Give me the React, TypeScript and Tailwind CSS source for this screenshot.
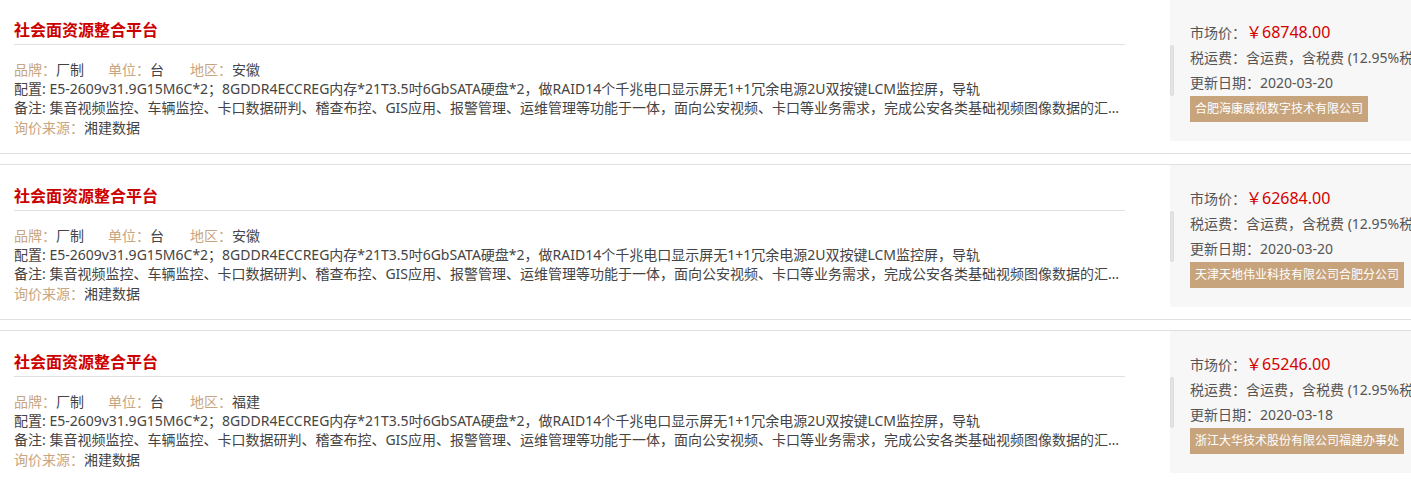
import React from "react";

type Item = {
  region: string;
  price: string;
  date: string;
  company: string;
};

const items: Item[] = [
  { region: "安徽", price: "￥68748.00", date: "2020-03-20", company: "合肥海康威视数字技术有限公司" },
  { region: "安徽", price: "￥62684.00", date: "2020-03-20", company: "天津天地伟业科技有限公司合肥分公司" },
  { region: "福建", price: "￥65246.00", date: "2020-03-18", company: "浙江大华技术股份有限公司福建办事处" },
];

const config =
  "E5-2609v31.9G15M6C*2；8GDDR4ECCREG内存*21T3.5吋6GbSATA硬盘*2，做RAID14个千兆电口显示屏无1+1冗余电源2U双按键LCM监控屏，导轨";
const remark =
  "集音视频监控、车辆监控、卡口数据研判、稽查布控、GIS应用、报警管理、运维管理等功能于一体，面向公安视频、卡口等业务需求，完成公安各类基础视频图像数据的汇聚、整合、共享与应用，实现视频资源的统一管理与调度";

function Row({ item }: { item: Item }) {
  return (
    <div className="flex h-[156px] border-y border-[#e0e0e0] mb-[10px] overflow-hidden">
      <div className="ml-[14px] w-[1111px] shrink-0">
        <div className="pt-[21px] pb-[4px] border-b border-[#e0e0e0] text-[16px] leading-[20px] font-bold text-[#cc0000]">
          社会面资源整合平台
        </div>
        <div className="mt-[15px] text-[14px] leading-[19px] text-[#444]">
          <div className="flex whitespace-nowrap">
            <span className="mr-[24px]">
              <span className="text-[#c8a57f]">品牌：</span>厂制
            </span>
            <span className="mr-[26px]">
              <span className="text-[#c8a57f]">单位：</span>台
            </span>
            <span>
              <span className="text-[#c8a57f]">地区：</span>
              {item.region}
            </span>
          </div>
          <div className="whitespace-nowrap overflow-hidden text-ellipsis">配置: {config}</div>
          <div className="whitespace-nowrap overflow-hidden text-ellipsis w-[1108px]">备注: {remark}</div>
          <div className="mt-[1px] whitespace-nowrap">
            <span className="text-[#c8a57f]">询价来源：</span>湘建数据
          </div>
        </div>
      </div>
      <div className="ml-[45px] flex-1 min-w-0 h-[142px] bg-[#f7f7f7] relative overflow-hidden">
        <div className="absolute left-0 top-[46px] w-[4px] h-[51px] rounded-[2px] bg-[#e4e4e4] border border-[#dcdcdc]" />
        <div className="pl-[20px] pt-[21px] text-[14px] leading-[25px] text-[#555] whitespace-nowrap">
          <div>
            市场价：<span className="text-[16px] text-[#d40000]">{item.price}</span>
          </div>
          <div>税运费：含运费，含税费 (12.95%税率)</div>
          <div>更新日期：{item.date}</div>
          <div className="inline-block h-[26px] px-[5px] text-[12px] leading-[26px] text-white bg-[#c8a47c]">
            {item.company}
          </div>
        </div>
      </div>
    </div>
  );
}

export default function App() {
  return (
    <div
      className="-mt-[2px] bg-white w-[1411px] overflow-hidden [text-spacing-trim:space-all]"
      style={{ fontFamily: '"Noto Sans", "Noto Sans CJK SC", sans-serif' }}
    >
      {items.map((it, i) => (
        <Row key={i} item={it} />
      ))}
    </div>
  );
}
